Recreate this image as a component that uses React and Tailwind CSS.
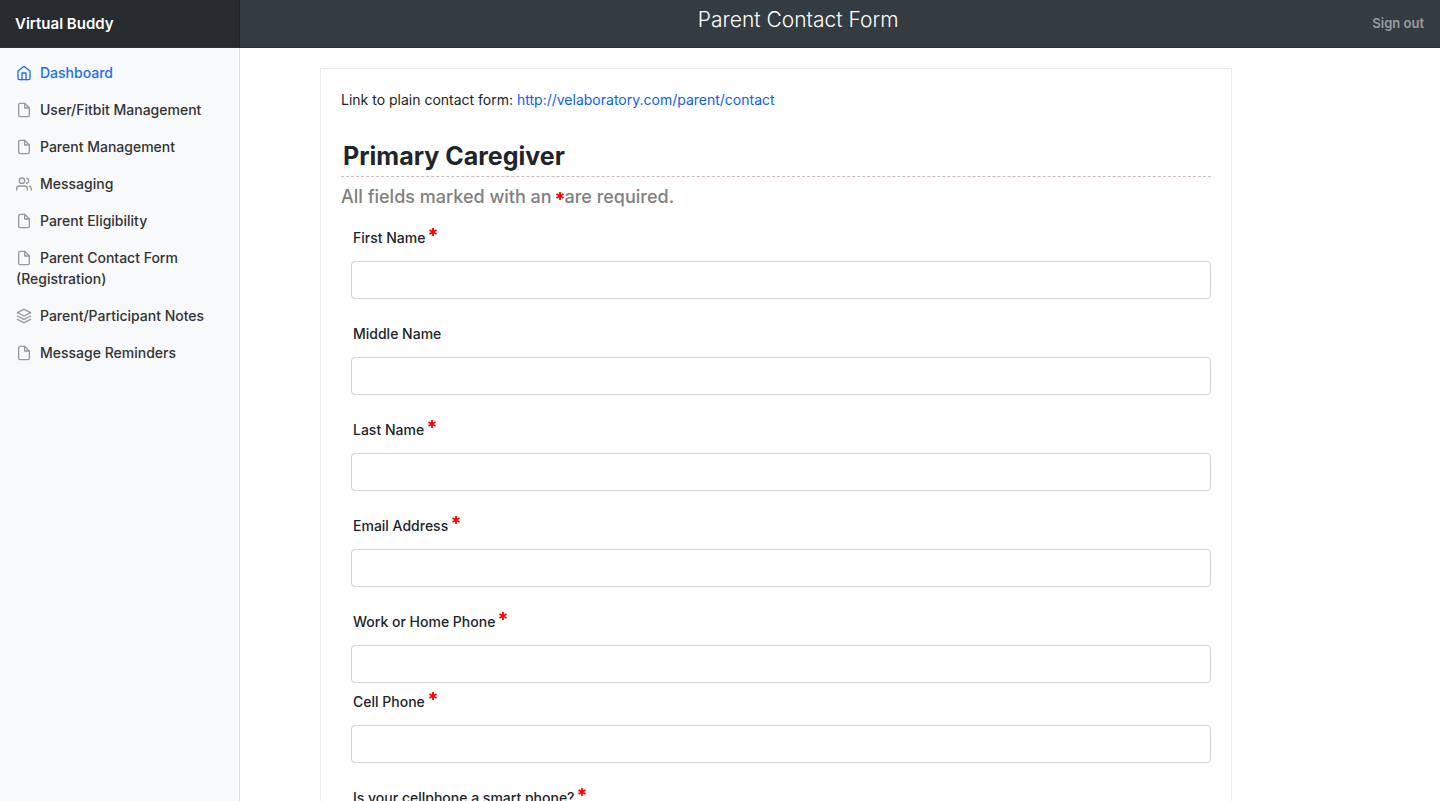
const navItems = [
  { label: "Dashboard", icon: "home", active: true },
  { label: "User/Fitbit Management", icon: "file" },
  { label: "Parent Management", icon: "file" },
  { label: "Messaging", icon: "users" },
  { label: "Parent Eligibility", icon: "file" },
  { label: "Parent Contact Form (Registration)", icon: "file" },
  { label: "Parent/Participant Notes", icon: "layers" },
  { label: "Message Reminders", icon: "file" },
];

const fields = [
  { id: "first-name", label: "First Name", required: true },
  { id: "middle-name", label: "Middle Name" },
  { id: "last-name", label: "Last Name", required: true },
  { id: "email", label: "Email Address", required: true, type: "email" },
  { id: "phone", label: "Work or Home Phone", required: true, type: "tel", tight: true },
  { id: "cell", label: "Cell Phone", required: true, type: "tel" },
];

const iconPaths = {
  home: (
    <>
      <path d="M3 9l9-7 9 7v11a2 2 0 0 1-2 2H5a2 2 0 0 1-2-2z" />
      <path d="M9 22V12h6v10" />
    </>
  ),
  users: (
    <>
      <path d="M17 21v-2a4 4 0 0 0-4-4H5a4 4 0 0 0-4 4v2" />
      <circle cx="9" cy="7" r="4" />
      <path d="M23 21v-2a4 4 0 0 0-3-3.87" />
      <path d="M16 3.13a4 4 0 0 1 0 7.75" />
    </>
  ),
  layers: (
    <>
      <path d="M12 2L2 7l10 5 10-5-10-5z" />
      <path d="M2 17l10 5 10-5" />
      <path d="M2 12l10 5 10-5" />
    </>
  ),
  file: (
    <>
      <path d="M13 2H6a2 2 0 0 0-2 2v16a2 2 0 0 0 2 2h12a2 2 0 0 0 2-2V9z" />
      <path d="M13 2v7h7" />
    </>
  ),
};

function NavIcon({ name }) {
  return (
    <svg
      width="16"
      height="16"
      viewBox="0 0 24 24"
      fill="none"
      stroke="currentColor"
      strokeWidth="2"
      strokeLinecap="round"
      strokeLinejoin="round"
      className="mr-2 inline-block align-[-3px]"
      aria-hidden="true"
    >
      {iconPaths[name]}
    </svg>
  );
}

function Asterisk() {
  return (
    <svg width="8" height="9" viewBox="0 0 8 9" stroke="#ff0000" strokeWidth="1.8" className="inline-block" aria-label="required" role="img">
      <path d="M4 1v8M0.4 3l7.2 4M7.6 3l-7.2 4" />
    </svg>
  );
}

function FieldLabel({ htmlFor, children, required }) {
  return (
    <label htmlFor={htmlFor} className="flex items-start gap-1 px-0.5 text-sm leading-[21px] font-medium">
      {children}
      {required && <Asterisk />}
    </label>
  );
}

export default function App() {
  return (
    <div className="min-h-screen bg-white font-['Inter','Liberation_Sans',sans-serif] text-sm text-[#212529]">
      <header className="sticky top-0 z-10 flex h-12 items-stretch border-b border-[#2f3038] bg-[#343b41]">
        <a href="#home" className="flex w-60 items-center border-r border-[#1f2326] bg-[#262c2f] px-[15px] text-[15px] font-semibold text-white">
          Virtual Buddy
        </a>
        <h1 className="grow pt-1 text-center text-[21px] leading-8 font-light text-white">Parent Contact Form</h1>
        <a href="#signout" className="flex items-center px-4 text-[13px] font-semibold text-[#9a9da0]">
          Sign out
        </a>
      </header>

      <div className="flex items-start">
        <nav className="sticky top-12 h-[calc(100vh-48px)] w-60 shrink-0 border-r border-[#dcdfe2] bg-[#f8f9fb] pt-1.5">
          <ul>
            {navItems.map((item) => (
              <li key={item.label}>
                <a
                  href="#nav"
                  className={
                    item.active
                      ? "block px-4 py-2 leading-[21px] font-medium text-[#1a6dff]"
                      : "block px-4 py-2 leading-[21px] font-medium text-[#333333]"
                  }
                >
                  <span className={item.active ? "" : "text-[#999999]"}>
                    <NavIcon name={item.icon} />
                  </span>
                  {item.label}
                </a>
              </li>
            ))}
          </ul>
        </nav>

        <main className="grow pt-5 pr-[208px] pl-20">
          <form className="border border-[#ececec] p-5">
            <p className="leading-[21px]">
              Link to plain contact form:{" "}
              <a href="#contact" className="text-[#0d5cff]">
                http://velaboratory.com/parent/contact
              </a>
            </p>

            <h2 className="mt-[30px] border-b border-dashed border-[#cbbcbf] px-0.5 pb-1 text-[25px] leading-8 font-bold">
              Primary Caregiver
            </h2>
            <p className="mt-2 text-lg leading-6 font-medium text-[#808080]">
              All fields marked with an <span className="inline-block align-[3px] leading-none"><Asterisk /></span>are required.
            </p>

            <div className="mt-[18px] pl-2.5">
              {fields.map((field) => (
                <div key={field.id} className={field.tight ? "mb-2" : "mb-6"}>
                  <FieldLabel htmlFor={field.id} required={field.required}>
                    {field.label}
                  </FieldLabel>
                  <input
                    id={field.id}
                    type={field.type || "text"}
                    className="mt-[13px] block h-[38px] w-full rounded border border-[#ced4da] bg-white px-3"
                  />
                </div>
              ))}
              <FieldLabel htmlFor="smart-phone" required>
                Is your cellphone a smart phone?
              </FieldLabel>
              <select id="smart-phone" className="mt-[13px] block h-[38px] w-full rounded border border-[#ced4da] bg-white px-3">
                <option>Yes</option>
                <option>No</option>
              </select>
            </div>
          </form>
        </main>
      </div>
    </div>
  );
}
